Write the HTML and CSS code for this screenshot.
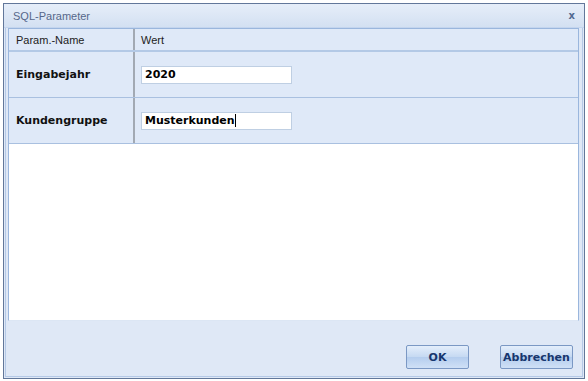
FILE: index.html
```html
<!DOCTYPE html>
<html lang="de">
<head>
    <meta charset="UTF-8">
    <title>SQL-Parameter</title>
    <link rel="stylesheet" href="styles.css">
</head>
<body>

    <div class="dialog">
        <div class="titlebar">
            <span class="title">SQL-Parameter</span>
            <span class="close">x</span>
        </div>

        <div class="body">
            <div class="grid">
                <div class="row head">
                    <div class="cell name">Param.-Name</div>
                    <div class="cell value">Wert</div>
                </div>
                <div class="row">
                    <div class="cell name"><strong>Eingabejahr</strong></div>
                    <div class="cell value"><input class="field" type="text" value="2020"></div>
                </div>
                <div class="row">
                    <div class="cell name"><strong>Kundengruppe</strong></div>
                    <div class="cell value"><div class="field">Musterkunden<span class="caret"></span></div></div>
                </div>
            </div>

            <div class="footer">
                <button class="btn ok">OK</button>
                <button class="btn cancel">Abbrechen</button>
            </div>
        </div>
    </div>

</body>
</html>
```

FILE: styles.css
```css
body {
    margin: 0;
    background-color: #fff;
    font-family: Tahoma, "DejaVu Sans", sans-serif;
    font-size: 11px;
}

.dialog {
    margin: 3px;
    width: 580px;
    height: 374px;
    border: 1px solid #62779a;
    background-color: #dfe8f6;
    display: flex;
    flex-direction: column;
}

.titlebar {
    height: 23px;
    display: flex;
    align-items: center;
    justify-content: space-between;
    padding: 0 9px 0 9px;
    background: linear-gradient(#e6eef9, #d3e0f2);
    border-bottom: 1px solid #c4d5ee;
}

.title {
    color: #56678a;
    font-family: "Liberation Sans", sans-serif;
    font-size: 11px;
}

.close {
    color: #526a90;
    font-weight: bold;
    font-size: 10px;
    font-family: "DejaVu Sans", sans-serif;
}

.body {
    flex: 1;
    display: flex;
    flex-direction: column;
    padding: 0 3px 3px 2px;
    border: 1px solid #b5c9e6;
    border-top: none;
    margin: 0 1px 1px 1px;
}

.grid {
    flex: 1;
    background-color: #fff;
    border: 1px solid #9ab6dd;
    border-bottom-color: #dce6f4;
}

.row {
    display: flex;
    height: 45px;
    background-color: #dfe9f8;
    border-bottom: 1px solid #a9c0e0;
}

.row.head {
    height: 21px;
    border-bottom: 2px solid #b3c9e6;
}

.cell {
    display: flex;
    align-items: center;
    color: #111;
    font-family: "DejaVu Sans", sans-serif;
    font-size: 11px;
}

.head .cell {
    font-family: "Liberation Sans", sans-serif;
    font-size: 11px;
    color: #222;
}

.name {
    width: 117px;
    padding-left: 7px;
    border-right: 2px solid #a2a9b3;
}

.value {
    padding-left: 6px;
}

.field {
    width: 143px;
    height: 16px;
    padding: 0 3px;
    border: 1px solid #bfcfe3;
    background-color: #fff;
    font-family: "DejaVu Sans", sans-serif;
    font-size: 11px;
    font-weight: bold;
    color: #000;
    display: flex;
    align-items: center;
    outline: none;
}

input.field {
    box-sizing: content-box;
    margin: 0;
}

.caret {
    display: inline-block;
    width: 1px;
    height: 13px;
    background-color: #000;
}

.footer {
    height: 48px;
    display: flex;
    justify-content: flex-end;
    align-items: flex-end;
    gap: 31px;
    padding: 0 6px 4px 0;
}

.btn {
    height: 24px;
    padding: 0;
    border: 1px solid #7b98c4;
    border-radius: 2px;
    background: linear-gradient(#e4eefb, #c5d9f2 50%, #b4cdee 51%, #cfe0f6);
    color: #17366e;
    font-family: "DejaVu Sans", sans-serif;
    font-size: 11px;
    font-weight: bold;
    cursor: pointer;
}

.btn.ok {
    width: 63px;
}

.btn.cancel {
    width: 73px;
}
```
